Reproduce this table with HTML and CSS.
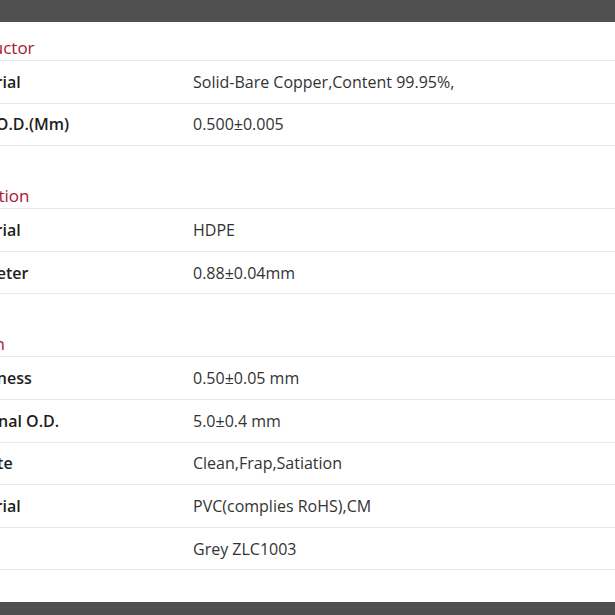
FILE: index.html
```html
<!DOCTYPE html>
<html lang="en">
<head>
<meta charset="utf-8">
<title>Specification</title>
<link rel="stylesheet" href="styles.css">
</head>
<body>
<header class="topbar"></header>
<main class="content">
  <section class="section">
    <h3 class="section-title">Conductor</h3>
    <div class="row"><div class="label">Material</div><div class="value">Solid-Bare Copper,Content 99.95%,</div></div>
    <div class="row"><div class="label">Wire O.D.(Mm)</div><div class="value">0.500±0.005</div></div>
  </section>
  <section class="section">
    <h3 class="section-title">Insulation</h3>
    <div class="row"><div class="label">Material</div><div class="value">HDPE</div></div>
    <div class="row"><div class="label">Diameter</div><div class="value">0.88±0.04mm</div></div>
  </section>
  <section class="section">
    <h3 class="section-title">Design</h3>
    <div class="row"><div class="label">Thickness</div><div class="value">0.50±0.05 mm</div></div>
    <div class="row"><div class="label">Nominal O.D.</div><div class="value">5.0±0.4 mm</div></div>
    <div class="row"><div class="label">Update</div><div class="value">Clean,Frap,Satiation</div></div>
    <div class="row"><div class="label">Material</div><div class="value">PVC(complies RoHS),CM</div></div>
    <div class="row"><div class="label">Color</div><div class="value">Grey ZLC1003</div></div>
  </section>
</main>
<footer class="bottombar"></footer>
</body>
</html>
```
FILE: styles.css
```css
html, body {
  margin: 0;
  padding: 0;
  background: #ffffff;
  overflow: hidden;
}
body {
  font-family: "Open Sans", "Liberation Sans", sans-serif;
  color: #333333;
}
.topbar {
  height: 22px;
  background: #505050;
}
.content {
  margin-left: -44px;
  padding-bottom: 32px;
  display: flex;
  flex-direction: column;
  gap: 24px;
}
.section {
  padding-top: 14px;
}
.section-title {
  margin: 0 0 0 -5px;
  padding-left: 0;
  font-size: 17px;
  font-weight: 400;
  line-height: 24px;
  color: #a81532;
  border-bottom: 1px solid #e8e8e8;
}
.row {
  display: grid;
  grid-template-columns: 237px 1fr;
  border-bottom: 1px solid #e8e8e8;
  font-size: 16px;
  line-height: 22px;
}
.label, .value {
  padding: 9.8px 0;
}
.label {
  font-weight: 600;
  color: #1e1e1e;
}
.value {
  color: #333333;
}
.bottombar {
  height: 60px;
  background: #4f4f4f;
}
```
